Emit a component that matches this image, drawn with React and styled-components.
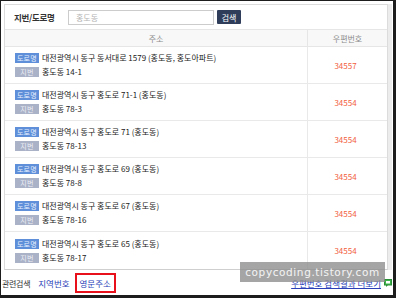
import React from 'react';
import styled, { createGlobalStyle } from 'styled-components';

const results = [
  { road: '대전광역시 동구 동서대로 1579 (홍도동, 홍도아파트)', jibun: '홍도동 14-1', zip: '34557' },
  { road: '대전광역시 동구 홍도로 71-1 (홍도동)', jibun: '홍도동 78-3', zip: '34554' },
  { road: '대전광역시 동구 홍도로 71 (홍도동)', jibun: '홍도동 78-13', zip: '34554' },
  { road: '대전광역시 동구 홍도로 69 (홍도동)', jibun: '홍도동 78-8', zip: '34554' },
  { road: '대전광역시 동구 홍도로 67 (홍도동)', jibun: '홍도동 78-16', zip: '34554' },
  { road: '대전광역시 동구 홍도로 65 (홍도동)', jibun: '홍도동 78-17', zip: '34554' },
];

const GlobalStyle = createGlobalStyle`
  body {
    margin: 0;
    background: #fff;
    font-family: "Noto Sans CJK KR", "Noto Sans", sans-serif;
  }
`;

const Frame = styled.div`
  width: 396px;
  height: 298px;
  box-sizing: border-box;
  border-style: solid;
  border-color: #1d1d1d;
  border-width: 1px 3px 3px 1px;
  display: flex;
  flex-direction: column;
  position: relative;
  overflow: hidden;
`;

const Body = styled.div`
  display: flex;
  padding: 3px 0 0 3px;
`;

const Panel = styled.div`
  width: 384px;
  height: 266px;
  box-sizing: border-box;
  border: 1px solid #dcdcdc;
  border-bottom-color: #cfcfcf;
  display: flex;
  flex-direction: column;
`;

const ScrollTrack = styled.div`
  width: 4px;
  height: 266px;
  background: #ececec;
`;

const SearchRow = styled.div`
  height: 24px;
  display: flex;
  align-items: center;
  padding-left: 9px;
`;

const SearchLabel = styled.span`
  font-size: 8.5px;
  font-weight: bold;
  color: #333;
  width: 54px;
  letter-spacing: -0.3px;
`;

const SearchInput = styled.div`
  width: 146px;
  height: 15px;
  box-sizing: border-box;
  border: 1px solid #cccccc;
  font-size: 8px;
  color: #b4b4b4;
  padding-left: 7px;
  display: flex;
  align-items: center;
`;

const SearchButton = styled.div`
  margin-left: 3px;
  width: 24px;
  height: 14px;
  border-radius: 1px;
  background: #2f3d5b;
  color: #fff;
  font-size: 8px;
  display: flex;
  align-items: center;
  justify-content: center;
`;

const HeaderRow = styled.div`
  height: 18px;
  display: grid;
  grid-template-columns: 302px 1fr;
  background: #f8f8f8;
  border-top: 1px solid #e6e6e6;
  border-bottom: 1px solid #e6e6e6;
  box-sizing: border-box;
`;

const HeaderCell = styled.div`
  display: flex;
  align-items: center;
  justify-content: center;
  font-size: 8px;
  color: #8c8c8c;
  border-left: ${(p) => (p.$divider ? '1px solid #e6e6e6' : 'none')};
`;

const Row = styled.div`
  height: 37px;
  box-sizing: border-box;
  display: grid;
  grid-template-columns: 302px 1fr;
  border-bottom: ${(p) => (p.$last ? 'none' : '1px solid #e9e9e9')};
`;

const AddressCell = styled.div`
  display: flex;
  flex-direction: column;
  justify-content: center;
  gap: 4px;
  padding-left: 10px;
`;

const Line = styled.div`
  display: flex;
  align-items: center;
  gap: 3px;
  font-size: 8px;
  line-height: 10px;
  color: #222;
  white-space: nowrap;
`;

const Badge = styled.span`
  width: 24px;
  height: 10px;
  display: inline-flex;
  align-items: center;
  justify-content: center;
  font-size: 7px;
  letter-spacing: 0.3px;
  color: ${(p) => (p.$road ? '#e8f0ff' : '#eef0f6')};
  background: ${(p) => (p.$road ? '#5e8fd8' : '#aab2c8')};
`;

const ZipCell = styled.div`
  display: flex;
  align-items: center;
  justify-content: center;
  font-size: 8px;
  color: #f2603e;
  border-left: 1px solid #e9e9e9;
  padding-right: 4px;
`;

const Footer = styled.div`
  flex: 1;
  display: flex;
  align-items: center;
  padding-left: 1px;
  padding-top: 1px;
`;

const FooterLabel = styled.span`
  font-size: 8px;
  color: #333;
  letter-spacing: -0.3px;
  margin-right: 3px;
`;

const FooterLink = styled.span`
  font-size: 8.5px;
  color: #2a3fb8;
  padding: 2px 3px;
  border: 2px solid ${(p) => (p.$boxed ? '#e8111b' : 'transparent')};
`;

const MoreLink = styled.span`
  margin-left: auto;
  font-size: 8.5px;
  color: #2a3fb8;
  text-decoration: underline;
  display: flex;
  align-items: center;
  gap: 3px;
  padding-right: 1px;
`;

const Watermark = styled.div`
  position: absolute;
  left: 239px;
  top: 261px;
  width: 145px;
  height: 20px;
  background: rgba(140, 140, 140, 0.78);
  color: #f4f4f4;
  font-family: "DejaVu Sans", sans-serif;
  font-size: 10.5px;
  letter-spacing: 0.6px;
  display: flex;
  align-items: center;
  justify-content: center;
`;

const CommentIcon = () => (
  <svg width="8" height="8" viewBox="0 0 8 8">
    <rect x="0.5" y="0.5" width="7" height="5.5" fill="#3cb44a" stroke="#2a8f36" strokeWidth="1" />
    <rect x="2" y="2" width="4" height="2.5" fill="#fff" />
    <path d="M2 6 L2 8 L4 6 Z" fill="#2a8f36" />
  </svg>
);

export default function App() {
  return (
    <>
      <GlobalStyle />
      <Frame>
        <Body>
          <Panel>
            <SearchRow>
              <SearchLabel>지번/도로명</SearchLabel>
              <SearchInput>홍도동</SearchInput>
              <SearchButton>검색</SearchButton>
            </SearchRow>
            <HeaderRow>
              <HeaderCell>주소</HeaderCell>
              <HeaderCell $divider>우편번호</HeaderCell>
            </HeaderRow>
            {results.map((r, i) => (
              <Row key={i} $last={i === results.length - 1}>
                <AddressCell>
                  <Line>
                    <Badge $road>도로명</Badge>
                    {r.road}
                  </Line>
                  <Line>
                    <Badge>지번</Badge>
                    {r.jibun}
                  </Line>
                </AddressCell>
                <ZipCell>{r.zip}</ZipCell>
              </Row>
            ))}
          </Panel>
          <ScrollTrack />
        </Body>
        <Footer>
          <FooterLabel>관련검색</FooterLabel>
          <FooterLink>지역번호</FooterLink>
          <FooterLink $boxed>영문주소</FooterLink>
          <MoreLink>
            우편번호 검색결과 더보기
            <CommentIcon />
          </MoreLink>
        </Footer>
        <Watermark>copycoding.tistory.com</Watermark>
      </Frame>
    </>
  );
}
